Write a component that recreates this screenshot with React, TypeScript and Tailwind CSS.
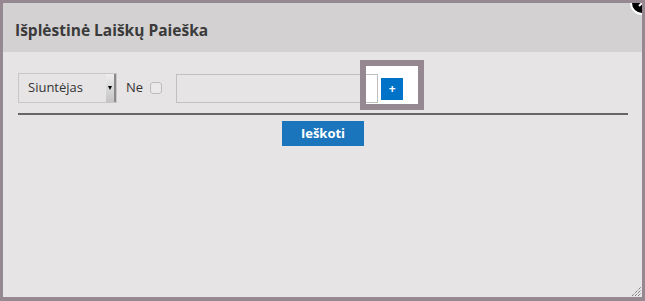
import { useState } from "react";

export default function App() {
  const [negate, setNegate] = useState(false);
  const [query, setQuery] = useState("");

  return (
    <div
      className="relative h-[301px] w-[645px] overflow-hidden border-[3px] border-b-4 border-[#958890] bg-[#e6e4e5] text-[#333]"
      style={{ fontFamily: '"Open Sans", "Noto Sans", sans-serif' }}
    >
      <div className="flex h-[49px] items-center bg-[#d3d1d2] px-3 pt-[7px]">
        <h1 className="text-[15.5px] font-bold text-[#3a3a3a]">Išplėstinė Laiškų Paieška</h1>
      </div>

      {/* close button, clipped by the frame */}
      <div className="absolute right-[-12px] top-[-12px] z-30 flex h-[24px] w-[24px] items-center justify-center rounded-full border-2 border-white bg-black">
        <svg width="10" height="10" viewBox="0 0 10 10">
          <path d="M2 2 L8 8 M8 2 L2 8" stroke="white" strokeWidth="2" />
        </svg>
      </div>

      <div className="px-[15px] pt-[21px]">
        <div className="relative flex items-center">
          <div className="flex h-[30px] w-[99px] items-stretch border border-[#c8c6c7] bg-[#e6e4e5]">
            <span className="flex flex-1 items-center pl-[9px] text-[13px]">Siuntėjas</span>
            <span className="flex w-[10px] items-center justify-center border-r-2 border-[#8a8a8a] bg-gradient-to-b from-[#eeeeee] to-[#c4c4c4]">
              <span className="h-0 w-0 border-x-[2.5px] border-t-[4px] border-x-transparent border-t-black" />
            </span>
          </div>

          <span className="ml-[9px] text-[13px]">Ne</span>
          <button
            type="button"
            onClick={() => setNegate((v) => !v)}
            className="ml-[7px] h-[12px] w-[12px] rounded-[3px] border border-[#bdbbbc] bg-[#ebe9ea]"
          >
            {negate && <span className="block text-[9px] leading-none">✓</span>}
          </button>

          <div className="relative ml-[14px] h-[29px] w-[202px]">
            {/* white backing of the highlight */}
            <div className="absolute left-[184px] top-[-14px] h-[50px] w-[64px] bg-white" />
            <input
              value={query}
              onChange={(e) => setQuery(e.target.value)}
              className="relative z-10 h-[29px] w-[202px] border border-[#c0c0c0] bg-transparent px-2 text-[13px] outline-none"
            />
            {/* highlight frame */}
            <div className="pointer-events-none absolute left-[184px] top-[-14px] z-20 h-[50px] w-[64px] border-[6px] border-[#958890]" />
            <button
              type="button"
              className="absolute left-[205px] top-[4px] z-30 flex h-[22px] w-[22px] items-center justify-center bg-[#0073c8] text-[12px] font-bold leading-none text-white"
            >
              +
            </button>
          </div>
        </div>

        <div className="mt-[10px] h-[2px] w-[610px] bg-[#666]" />

        <div className="mt-[6px] flex justify-center">
          <button
            type="button"
            className="ml-[1px] h-[25px] w-[82px] bg-[#1b75bc] text-[13px] font-bold text-white"
          >
            Ieškoti
          </button>
        </div>
      </div>

      {/* resize grip */}
      <svg className="absolute bottom-0 right-0" width="11" height="11" viewBox="0 0 11 11">
        <path d="M1 10 L10 1 M4 10 L10 4 M7 10 L10 7" stroke="#555" strokeWidth="1" strokeDasharray="1 1" />
      </svg>
    </div>
  );
}
